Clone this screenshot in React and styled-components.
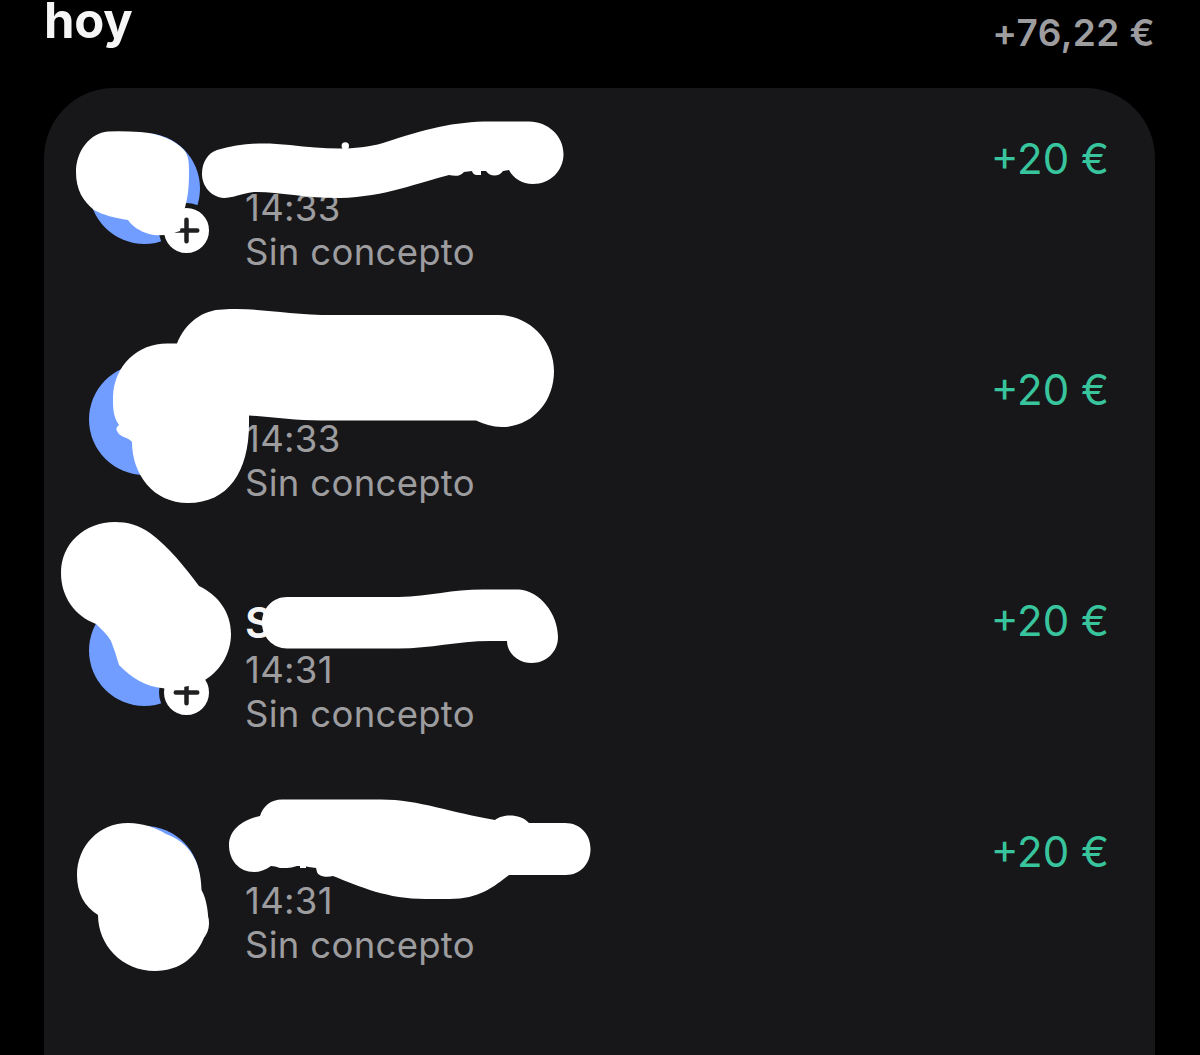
import React from 'react';
import styled, { createGlobalStyle } from 'styled-components';

const GlobalStyle = createGlobalStyle`
  html, body { margin: 0; background: #000; }
  body { font-family: Inter, "Liberation Sans", sans-serif; overflow: hidden; }
`;

const Screen = styled.main`
  display: flex;
  flex-direction: column;
  box-sizing: border-box;
  height: 1055px;
  padding: 0 45px 0 44px;
  overflow: hidden;
  background: #000;
`;

const DayHeader = styled.header`
  display: flex;
  flex: none;
  justify-content: space-between;
  height: 88px;
`;

const DayTitle = styled.h2`
  margin: -9px 0 0;
  font-size: 49px;
  line-height: 60px;
  font-weight: 700;
  letter-spacing: -0.2px;
  color: #f5f5f5;
`;

const DayTotal = styled.span`
  padding-top: 10px;
  font-size: 37px;
  line-height: 45px;
  font-weight: 600;
  letter-spacing: 0.4px;
  color: #9d9da0;
`;

const Card = styled.section`
  flex: 1;
  border-radius: 70px 70px 0 0;
  background: #171719;
`;

const Row = styled.article`
  position: relative;
  display: flex;
  align-items: flex-start;
  box-sizing: border-box;
  height: 231px;
  padding: 45px 46px 0 45px;
`;

const Avatar = styled.div`
  position: relative;
  flex: none;
  width: 111px;
  height: 111px;
  margin-right: 45px;
  border-radius: 50%;
  background: #709dff;
`;

const Badge = styled.div`
  position: absolute;
  right: -14px;
  bottom: -14px;
  display: flex;
  align-items: center;
  justify-content: center;
  width: 45px;
  height: 45px;
  border: 5px solid #171719;
  border-radius: 50%;
  background: #fff;
`;

const Details = styled.div`
  flex: 1;
  display: flex;
  flex-direction: column;
  padding-top: 2px;
`;

const Name = styled.strong`
  height: 51px;
  margin-top: 0;
  font-size: 42px;
  line-height: 51px;
  font-weight: 600;
  color: #f5f5f5;
`;

const Meta = styled.span`
  font-size: 36.5px;
  line-height: 44px;
  font-weight: 400;
  letter-spacing: 0.3px;
  color: #9d9da0;
`;

const Amount = styled.span`
  font-size: 42px;
  line-height: 51px;
  font-weight: 400;
  color: #38c49c;
`;

const Scribble = styled.svg`
  position: absolute;
  left: 0;
  top: 0;
  width: 600px;
  height: 231px;
  overflow: visible;
  pointer-events: none;
`;

const movements = [
  {
    time: '14:33',
    marks: [
      'M108 131.500Q124 131 140 132C159 133 176 141 184 150C189 156 189 163 189 173C189 187 188 198 184 211L180 231C171 234 160 237 149 234C139 231 132 226 128 220C115 218 103 215 94 210C83 201 76 190 76 172C76 151 90 133 108 131.500Z',
      'M217 150C240 143 263 142 290 145C325 149 355 151 383 143C426 129 453 121.500 491 121.500H529C548 121.500 563.500 136 563.500 154C563.500 171 550 184 533 184C522 184 513 178 509 170L503 171C499 177 490 177 486 171L481 171V175H477Q473 175 472 171L464 172C460 177 454 176 449 175C420 182 385 197 340 198C304 198 274 191 254 192C240 194 232 198 224 198C211 197 202 186 202 174C202 162 208 153 217 150Z',
      'M349 146A3.700 3.700 0 1 1 341.600 146A3.700 3.700 0 1 1 349 146Z',
    ],
  },
  {
    time: '14:33',
    marks: [
      'M177 343.500C185 323 203 309.500 223 309.500C257 307 285 315 334 315H498C529 315 554 340 554 371C554 403 531 427 502 427C492 427 484 424 476 420.500H326C297 421 276 417 249 415.500V424C249 472 228 503 188 503C153 503 132 474 132 442C127 436 120 438 117 431Q115 428 119 425C113 416 113 409 113 397C114 365 138 343.500 167 343.500Z',
    ],
  },
  {
    time: '14:31',
    name: 'S',
    marks: [
      'M115 522C127 522 139 525 150 533C169 547 184 566 199 586C218 595 231 612 231 634C231 653 221 670 205 680C193 686 179 689 165 688.500C145 687 132 678 119 665L115 652L111 641C107 634 101 629 96 624C75 616 61 597 61 573C61 544 84 522 115 522Z',
      'M287 597H399C430 596 452 589.500 483 589.500H519C540 591 558 614 558 637C558 652 546 663 532 663C518 663 507 653 507 641H490C455 641 430 649 395 648.500H287C273 648.500 262 637 262 623C262 608 273 597 287 597Z',
    ],
  },
  {
    time: '14:31',
    marks: [
      'M128 823C144 823 156 828 166 834C190 843 201 862 201.500 890C207 900 208 912 208.500 923C208 928 206 931 205 935C198 956 180 971 155 971C122 971 98 945 98 915C84 906 77 893 77 875C77 846 99 823 128 823Z',
      'M260 816C263 806 271 799.500 282 799.500H381C419 799.500 452 813 495 820C502 814 520 813 529 823H565C580 823 590.500 834 590.500 849C590.500 864 580 875 566 875H509C493 887 480 899 449 899H426C387 899 361 887 333 876C326 878 318 876 317 872L316 868Q310 867 306 866.500V868H300V866H297Q291 868 287 868L280 868Q275 866 271 866C265 870 260 872 254 872C239 872 229 860 229 845C229 829 244 819 260 816Z',
    ],
  },
];

function PlusIcon() {
  return (
    <svg width="27" height="27" viewBox="0 0 27 27" fill="none">
      <path d="M2.750 13.500H24.250M13.500 2.750V24.250" stroke="#202022" strokeWidth="4.500" strokeLinecap="round" />
    </svg>
  );
}

function Movement({ item, index }) {
  return (
    <Row>
      <Avatar>
        <Badge><PlusIcon /></Badge>
      </Avatar>
      <Details>
        <Name>{item.name}</Name>
        <Meta>{item.time}</Meta>
        <Meta>Sin concepto</Meta>
      </Details>
      <Amount>+20 €</Amount>
      <Scribble viewBox={`44 ${88 + index * 231} 600 231`} aria-hidden="true">
        {item.marks.map((d) => <path key={d} d={d} fill="#fff" />)}
      </Scribble>
    </Row>
  );
}

export default function App() {
  return (
    <>
      <GlobalStyle />
      <Screen>
        <DayHeader>
          <DayTitle>hoy</DayTitle>
          <DayTotal>+76,22 €</DayTotal>
        </DayHeader>
        <Card>
          {movements.map((item, index) => <Movement key={index} item={item} index={index} />)}
        </Card>
      </Screen>
    </>
  );
}
